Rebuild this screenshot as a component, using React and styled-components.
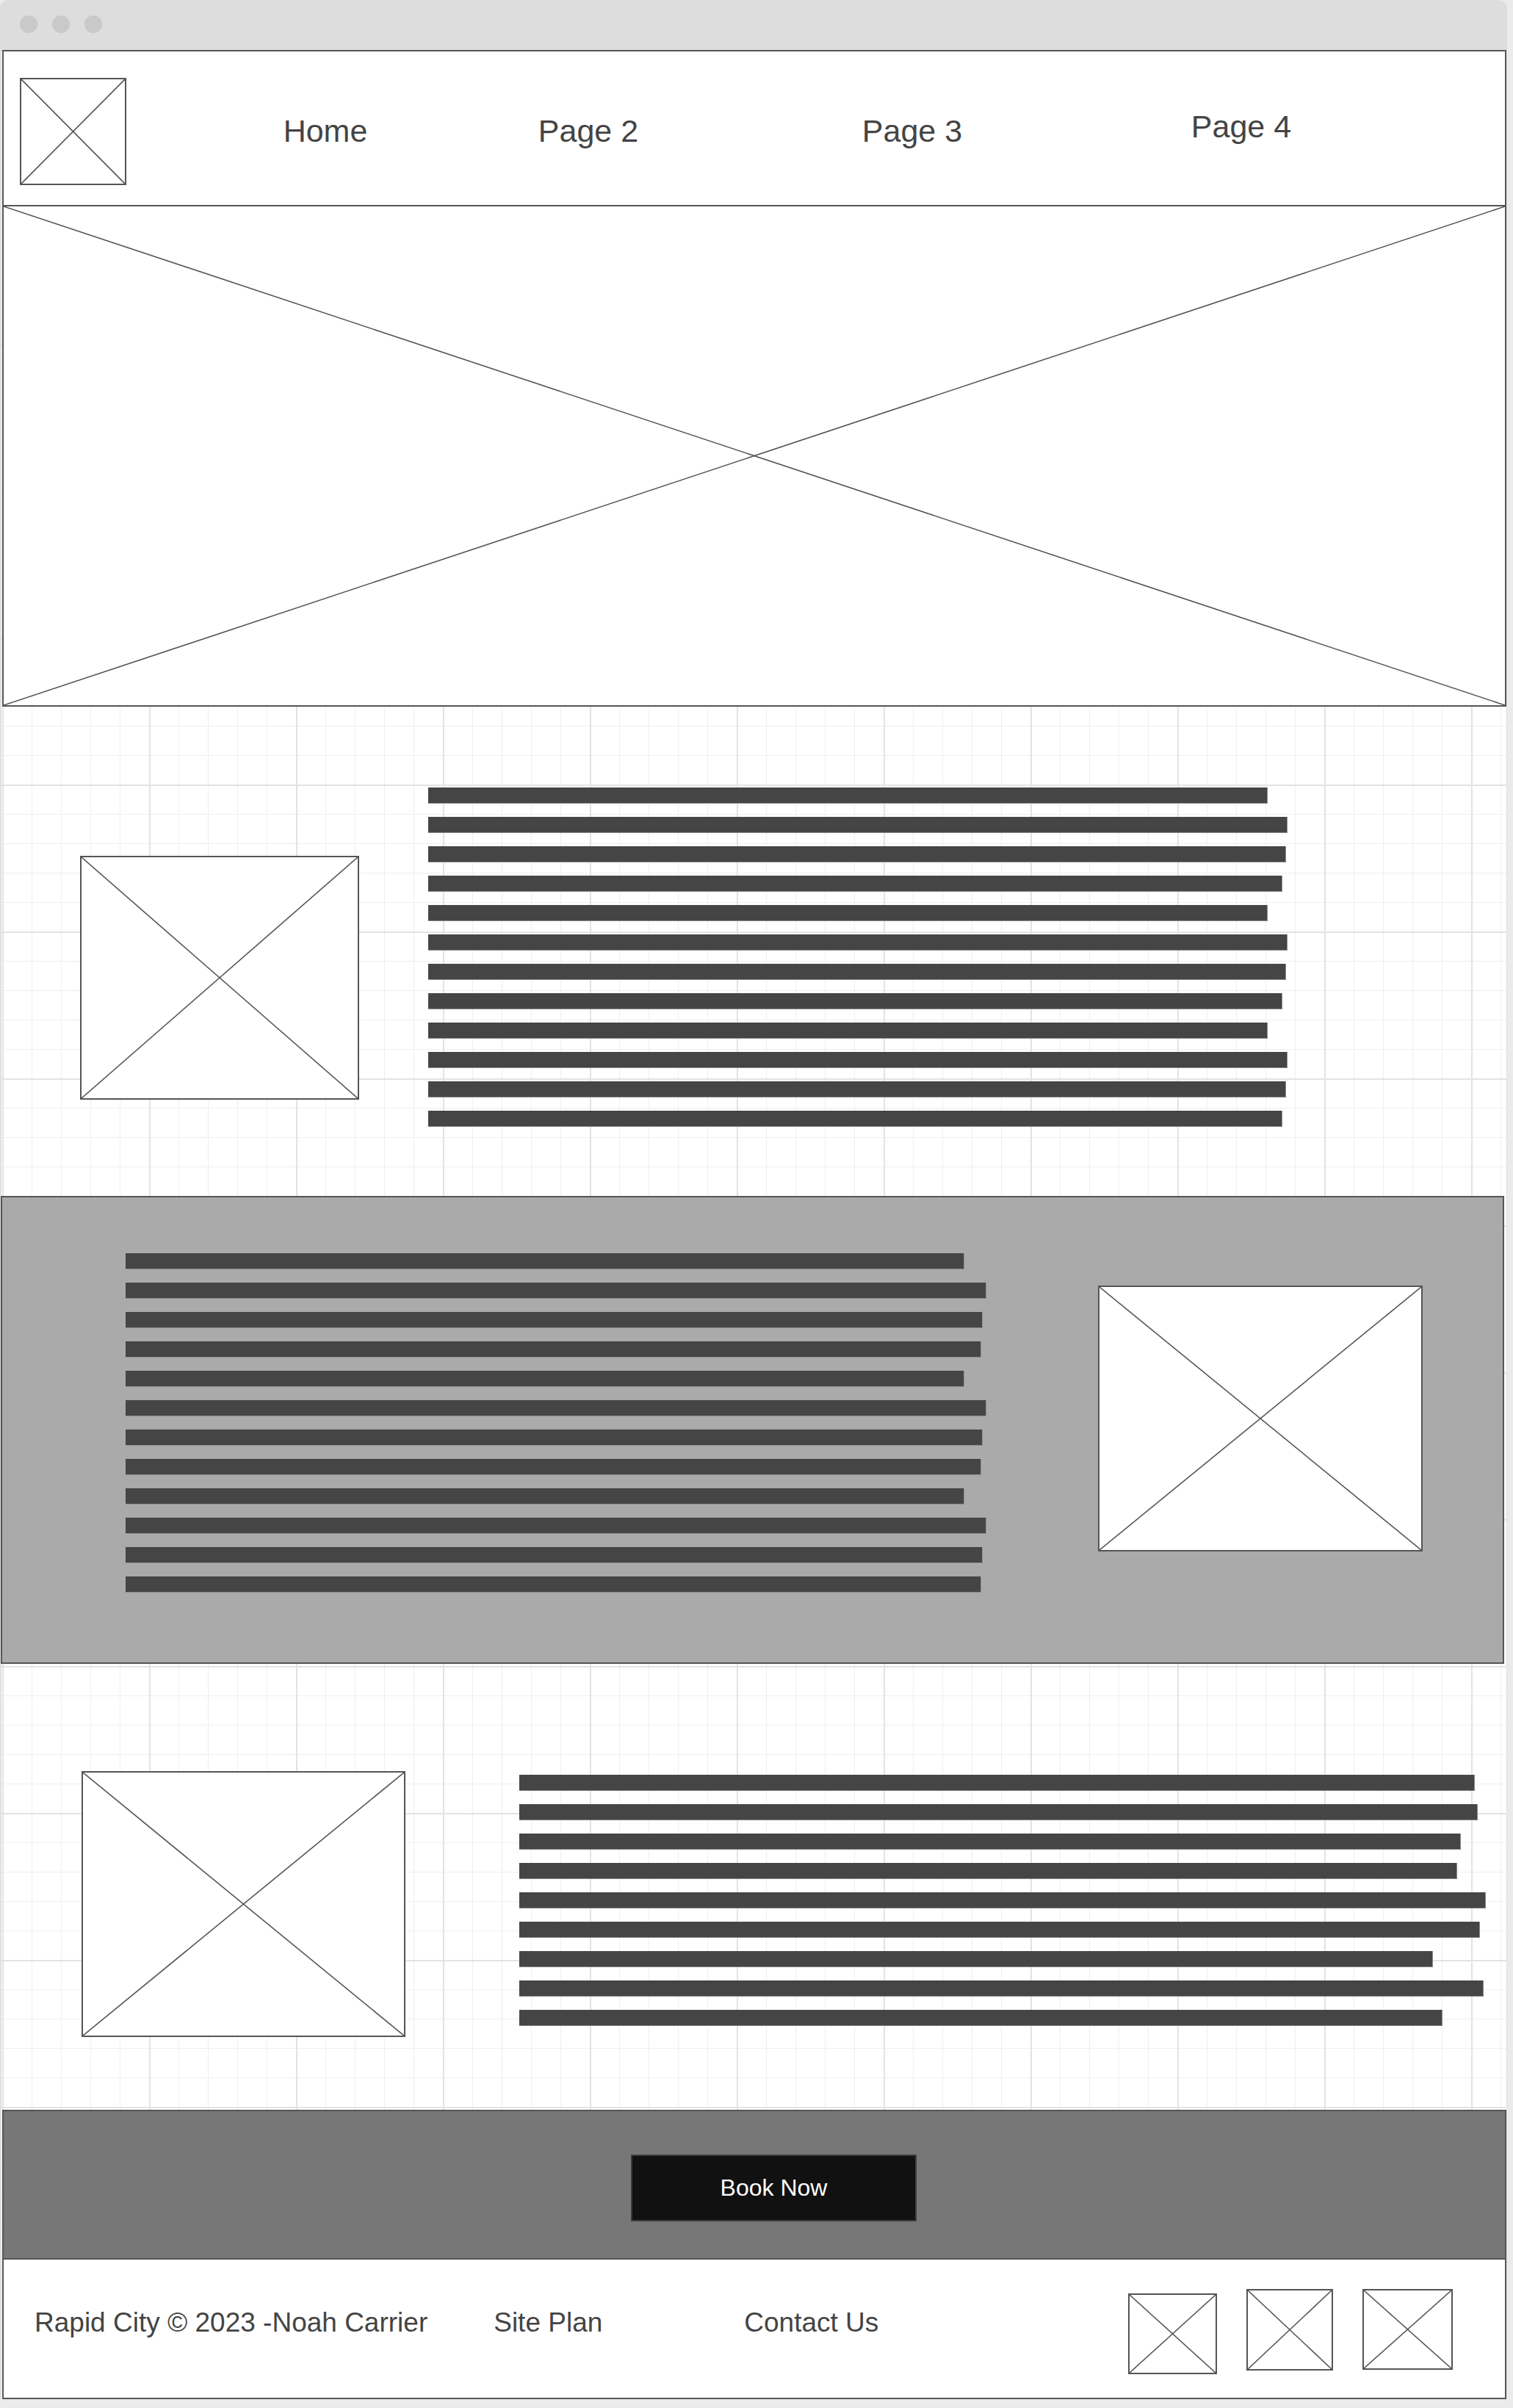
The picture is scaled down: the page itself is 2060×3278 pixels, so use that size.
import React from 'react'
import styled, { createGlobalStyle } from 'styled-components'

const GlobalStyle = createGlobalStyle`
  body {
    margin: 0;
    background: #ebebeb;
    font-family: "Liberation Sans", Arial, sans-serif;
  }
`

const INK = '#555555'

// bar widths, as measured from the mockup
const firstBars = [1143, 1170, 1168, 1163, 1143, 1170, 1168, 1163, 1143, 1170, 1168, 1163]
const secondBars = [1142, 1172, 1167, 1165, 1142, 1172, 1167, 1165, 1142, 1172, 1167, 1165]
const thirdBars = [1301, 1305, 1282, 1277, 1316, 1308, 1244, 1313, 1257]

const Window = styled.div`
  width: 2052px;
`

const TitleBar = styled.div`
  height: 68px;
  background: #dddddd;
  border-radius: 12px 12px 0 0;
  display: flex;
  align-items: center;
  gap: 20px;
  padding-left: 27px;
  box-sizing: border-box;
`

const Dot = styled.span`
  width: 24px;
  height: 24px;
  border-radius: 50%;
  background: #c9c9c9;
  margin-top: -2px;
`

const Canvas = styled.div`
  box-sizing: border-box;
  border-left: 2px solid #e0e0e0;
  border-right: 1px solid #e0e0e0;
  padding-left: 1px;
  background-color: #ffffff;
  background-image:
    linear-gradient(to right, #e3e3e3 2px, transparent 2px),
    linear-gradient(to bottom, #e3e3e3 2px, transparent 2px),
    linear-gradient(to right, #efefef 1px, transparent 1px),
    linear-gradient(to bottom, #efefef 1px, transparent 1px);
  background-size: 200px 200px, 200px 200px, 40px 40px, 40px 40px;
  background-origin: content-box;
`

const Header = styled.header`
  height: 213px;
  box-sizing: border-box;
  border: 2px solid ${INK};
  background: #fff;
  display: flex;
  align-items: center;
  padding-left: 22px;
`

const NavLink = styled.a`
  width: 240px;
  margin-left: ${p => p.$offset}px;
  text-align: center;
  font-size: 43px;
  color: #444;
  text-decoration: none;
  margin-top: ${p => (p.$raise ? '-4px' : '8px')};
`

const Hero = styled.div`
  height: 681px;
  box-sizing: border-box;
  border: 2px solid ${INK};
  border-top: none;
  background: #fff;
`

const PlaceholderBox = styled.div`
  width: ${p => p.$w}px;
  height: ${p => p.$h}px;
  box-sizing: border-box;
  border: ${p => (p.$full ? 'none' : `2px solid ${INK}`)};
  background: #fff;
  flex-shrink: 0;
  margin-left: ${p => p.$ml || 0}px;
  margin-top: ${p => p.$mt || 0}px;

  svg {
    display: block;
    width: 100%;
    height: 100%;
  }
`

function Placeholder({ w, h, ml, mt, full }) {
  return (
    <PlaceholderBox $w={w} $h={h} $ml={ml} $mt={mt} $full={full}>
      <svg viewBox="0 0 100 100" preserveAspectRatio="none">
        <line x1="0" y1="0" x2="100" y2="100" stroke={INK} strokeWidth="1.6" vectorEffect="non-scaling-stroke" />
        <line x1="100" y1="0" x2="0" y2="100" stroke={INK} strokeWidth="1.6" vectorEffect="non-scaling-stroke" />
      </svg>
    </PlaceholderBox>
  )
}

const GridSection = styled.section`
  height: ${p => p.$h}px;
  box-sizing: border-box;
  display: flex;
  align-items: flex-start;
  padding-top: ${p => p.$pt}px;
`

const GreySection = styled.section`
  height: 637px;
  width: 2047px;
  margin-left: -2px;
  box-sizing: border-box;
  border: 2px solid ${INK};
  background: #aaaaaa;
  display: flex;
  align-items: flex-start;
  padding: 76px 0 0 168px;
`

const BarStack = styled.div`
  display: flex;
  flex-direction: column;
  gap: 18px;
  margin-left: ${p => p.$ml || 0}px;
  margin-top: ${p => p.$mt || 0}px;
`

const Bar = styled.div`
  width: ${p => p.$w}px;
  height: 22px;
  box-sizing: border-box;
  background: #454545;
  border-right: 1px solid #8a8a8a;
  border-bottom: 1px solid #8a8a8a;
`

const Cta = styled.section`
  height: 204px;
  box-sizing: border-box;
  border: 2px solid ${INK};
  background: #777777;
  display: flex;
  align-items: center;
  padding-left: 854px;
`

const BookButton = styled.button`
  width: 389px;
  height: 91px;
  margin-top: 9px;
  background: #111;
  border: 2px solid #3c3c3c;
  color: #fff;
  font-family: "Liberation Sans", Arial, sans-serif;
  font-size: 32px;
  cursor: pointer;
`

const Footer = styled.footer`
  height: 190px;
  box-sizing: border-box;
  border: 2px solid ${INK};
  border-top: none;
  background: #fff;
  display: flex;
  align-items: center;
  padding-left: 42px;
`

const FooterText = styled.span`
  font-size: 37px;
  color: #444;
  margin-left: ${p => p.$ml || 0}px;
  margin-bottom: 16px;
  white-space: nowrap;
`

const Socials = styled.div`
  display: flex;
  gap: 40px;
  margin-left: 340px;
  margin-top: 8px;
`

function Bars({ widths, ml, mt }) {
  return (
    <BarStack $ml={ml} $mt={mt}>
      {widths.map((w, i) => <Bar key={i} $w={w} />)}
    </BarStack>
  )
}

export default function App() {
  return (
    <>
      <GlobalStyle />
      <Window>
        <TitleBar>
          <Dot /><Dot /><Dot />
        </TitleBar>
        <Canvas>
          <Header>
            <Placeholder w={145} h={146} mt={9} />
            <NavLink $offset={151}>Home</NavLink>
            <NavLink $offset={118}>Page 2</NavLink>
            <NavLink $offset={201}>Page 3</NavLink>
            <NavLink $offset={208} $raise>Page 4</NavLink>
          </Header>

          <Hero>
            <Placeholder w={2044} h={679} full />
          </Hero>

          <GridSection $h={666} $pt={110}>
            <Placeholder w={380} h={332} ml={106} mt={93} />
            <Bars widths={firstBars} ml={94} />
          </GridSection>

          <GreySection>
            <Bars widths={secondBars} />
            <Placeholder w={442} h={362} ml={152} mt={44} />
          </GreySection>

          <GridSection $h={607} $pt={146}>
            <Placeholder w={441} h={362} ml={108} />
            <Bars widths={thirdBars} ml={155} mt={5} />
          </GridSection>

          <Cta>
            <BookButton>Book Now</BookButton>
          </Cta>

          <Footer>
            <FooterText>Rapid City © 2023 -Noah Carrier</FooterText>
            <FooterText $ml={90}>Site Plan</FooterText>
            <FooterText $ml={193}>Contact Us</FooterText>
            <Socials>
              <Placeholder w={121} h={110} mt={6} />
              <Placeholder w={118} h={111} />
              <Placeholder w={123} h={110} />
            </Socials>
          </Footer>
        </Canvas>
      </Window>
    </>
  )
}
